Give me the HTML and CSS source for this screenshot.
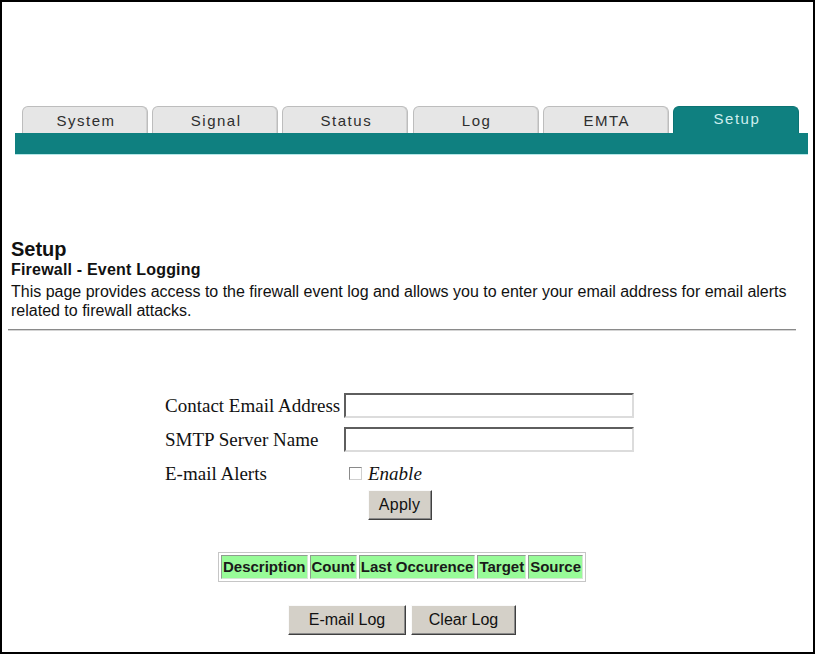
FILE: index.html
```html
<!DOCTYPE html>
<html lang="en">
<head>
<meta charset="utf-8">
<title>Setup - Firewall Event Logging</title>
<link rel="stylesheet" href="styles.css">
</head>
<body>
<div class="frame">
  <div class="nav">
    <div class="tabs">
      <div class="tab">System</div>
      <div class="tab">Signal</div>
      <div class="tab">Status</div>
      <div class="tab">Log</div>
      <div class="tab">EMTA</div>
      <div class="tab tab-active">Setup</div>
    </div>
    <div class="bar"></div>
  </div>

  <div class="content">
    <div class="title">Setup</div>
    <div class="subtitle">Firewall - Event Logging</div>
    <p class="desc">This page provides access to the firewall event log and allows you to enter your email address for email alerts related to firewall attacks.</p>
    <hr class="rule">

    <div class="form-wrap">
      <div class="form">
        <label class="label" for="email">Contact Email Address</label>
        <input class="field" id="email" type="text">
        <label class="label" for="smtp">SMTP Server Name</label>
        <input class="field" id="smtp" type="text">
        <span class="label">E-mail Alerts</span>
        <label class="alerts"><input class="check" type="checkbox"><span class="enable">Enable</span></label>
      </div>
      <div class="apply-row"><button class="btn btn-apply" type="button">Apply</button></div>
    </div>

    <div class="log-wrap">
      <table class="log">
        <tr>
          <th>Description</th>
          <th>Count</th>
          <th>Last Occurence</th>
          <th>Target</th>
          <th>Source</th>
        </tr>
      </table>
    </div>

    <div class="actions">
      <button class="btn btn-mail" type="button">E-mail Log</button>
      <button class="btn btn-clear" type="button">Clear Log</button>
    </div>
  </div>
</div>
</body>
</html>
```

FILE: styles.css
```css
body {
  margin: 0;
  background: #fff;
}

.frame {
  box-sizing: border-box;
  width: 815px;
  height: 654px;
  border: 2px solid #000;
  background: #fff;
}

/* ---------- navigation tabs ---------- */
.nav {
  margin: 104px 0 0 13px;
  width: 793px;
}

.tabs {
  display: flex;
  gap: 4.2px;
  padding-left: 7px;
}

.tab {
  box-sizing: border-box;
  width: 126px;
  height: 27px;
  padding: 2px 0 0 2px;
  border: 1px solid #bdbdbd;
  border-bottom: none;
  border-radius: 6px 6px 0 0;
  background: #e6e6e6;
  box-shadow: inset -1px 0 0 #d2d2d2;
  font: 15px/24px "Liberation Sans", Arial, sans-serif;
  letter-spacing: 1.5px;
  text-align: center;
  color: #2e2e2e;
}

.tab-active {
  background: #0f8080;
  border-color: #0c7373;
  box-shadow: none;
  color: #cdeeee;
  padding-top: 0;
}

.bar {
  height: 21px;
  background: #0f8080;
  box-shadow: 0 1px 0 #b5e8e8;
}

/* ---------- page content ---------- */
.content {
  margin-left: 6px;
  width: 788px;
  font-family: "Liberation Sans", Arial, sans-serif;
  color: #111;
}

.title {
  margin-top: 85px;
  padding-left: 3px;
  font-size: 20px;
  font-weight: bold;
  line-height: 20px;
}

.subtitle {
  padding-left: 3px;
  font-size: 16px;
  font-weight: bold;
  line-height: 21px;
  letter-spacing: 0.2px;
}

.desc {
  margin: 2px 0 0;
  padding-left: 3px;
  font-size: 16px;
  line-height: 19px;
}

.rule {
  margin: 9px 0 0;
  height: 0;
  border: 0;
  border-top: 1px solid #8a8a8a;
  border-bottom: 1px solid #d4d4d4;
}

/* ---------- form ---------- */
.form-wrap {
  margin: 62px 0 0 157px;
  width: 469px;
}

.form {
  display: grid;
  grid-template-columns: 179px 290px;
  row-gap: 9px;
  font: 19px/25px "Liberation Serif", "Times New Roman", serif;
  color: #111;
}

.label {
  white-space: nowrap;
}

.field {
  box-sizing: border-box;
  display: block;
  width: 290px;
  height: 25px;
  margin: 0;
  padding: 0 3px;
  border: 2px solid;
  border-color: #5e5e5e #dcdcdc #dcdcdc #5e5e5e;
  background: #fff;
}

.alerts {
  display: flex;
  align-items: center;
  gap: 6px;
  padding-left: 5px;
}

.check {
  appearance: none;
  -webkit-appearance: none;
  box-sizing: border-box;
  width: 13px;
  height: 13px;
  margin: 0;
  border: 1px solid;
  border-color: #8a8a8a #cfcfcf #cfcfcf #8a8a8a;
  background: #fff;
}

.enable {
  font-style: italic;
  line-height: 23px;
}

.apply-row {
  display: flex;
  justify-content: center;
  margin-top: 4px;
}

.btn {
  box-sizing: border-box;
  height: 30px;
  margin: 0;
  padding: 0 9px;
  border: 1px solid;
  border-color: #fafafa #404040 #404040 #fafafa;
  box-shadow: inset -1px -1px 0 #8a8a8a;
  background: #d4d0c8;
  font: 16px "Liberation Sans", Arial, sans-serif;
  color: #111;
}

.btn-apply {
  width: 64px;
  letter-spacing: 0.3px;
}

.btn-mail {
  width: 118px;
}

.btn-clear {
  width: 105px;
}

/* ---------- log table ---------- */
.log-wrap {
  display: flex;
  justify-content: center;
  margin-top: 32px;
}

.log {
  border-collapse: separate;
  border-spacing: 2px;
  border: 1px solid #c6c6c6;
}

.log th {
  padding: 1px 1px;
  border: 1px solid;
  border-color: #8e9e8e #d6e6d6 #d6e6d6 #8e9e8e;
  background: #98fb98;
  font-size: 15px;
  font-weight: bold;
  line-height: 20px;
  white-space: nowrap;
  color: #1a1a1a;
}

.actions {
  display: flex;
  justify-content: center;
  gap: 5px;
  margin-top: 23px;
}
```
